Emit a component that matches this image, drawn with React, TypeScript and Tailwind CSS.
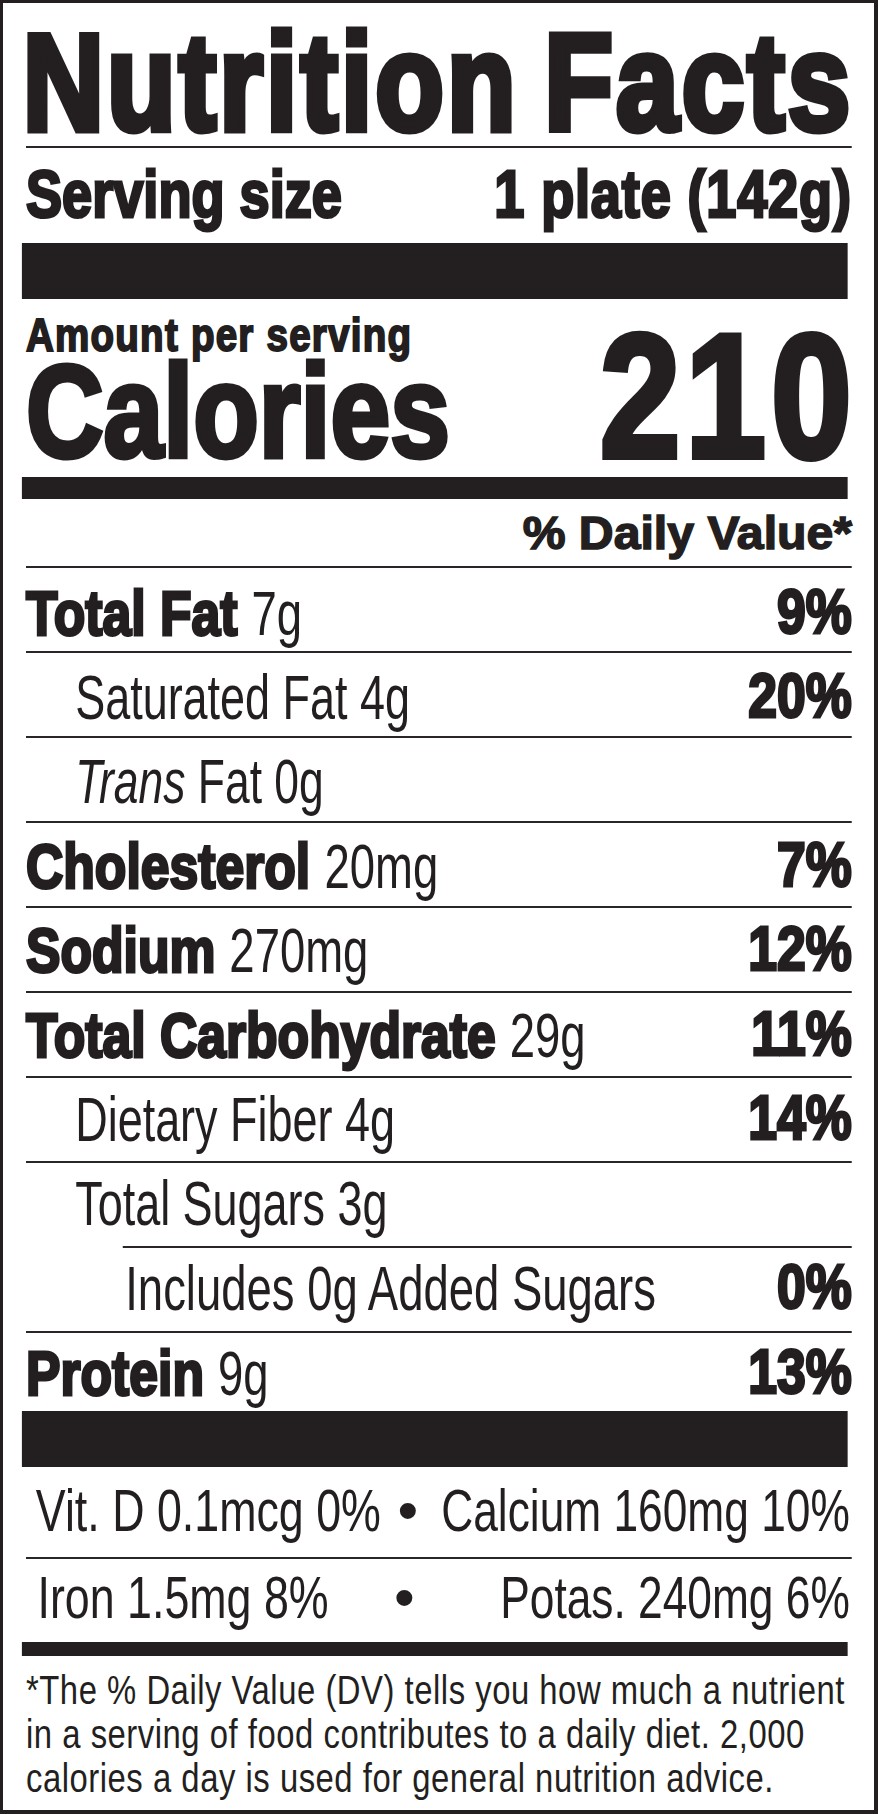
import React from "react";

// The label is typeset in Arial-metric faces and condensed horizontally
// (the whole column is drawn at 1007px and narrowed to 826px).
const B = "font-['Liberation_Sans',Arial,sans-serif] font-bold";
const R = "font-['Liberation_Sans',Arial,sans-serif] font-normal";

type Row = {
  kind: "bold" | "sub" | "trans" | "subsub";
  label: string;
  amt?: string;
  pct: string;
  pt: string;
  h: string;
};

const rows: Row[] = [
  { kind: "bold", label: "Total Fat", amt: "7g", pct: "9%", pt: "pt-[13px]", h: "h-[83px]" },
  { kind: "sub", label: "Saturated Fat 4g", pct: "20%", pt: "pt-[12px]", h: "h-[83px]" },
  { kind: "trans", label: "Fat 0g", pct: "", pt: "pt-[11px]", h: "h-[83px]" },
  { kind: "bold", label: "Cholesterol", amt: "20mg", pct: "7%", pt: "pt-[11px]", h: "h-[83px]" },
  { kind: "bold", label: "Sodium", amt: "270mg", pct: "12%", pt: "pt-[10px]", h: "h-[83px]" },
  { kind: "bold", label: "Total Carbohydrate", amt: "29g", pct: "11%", pt: "pt-[10px]", h: "h-[83px]" },
  { kind: "sub", label: "Dietary Fiber 4g", pct: "14%", pt: "pt-[9px]", h: "h-[83px]" },
  { kind: "sub", label: "Total Sugars 3g", pct: "", pt: "pt-[8px]", h: "h-[83px]" },
  { kind: "subsub", label: "Includes 0g Added Sugars", pct: "0%", pt: "pt-[8px]", h: "h-[83px]" },
  { kind: "bold", label: "Protein", amt: "9g", pct: "13%", pt: "pt-[8px]", h: "h-[78px]" },
];

function NutrientRow({ r }: { r: Row }) {
  let left: React.ReactNode;
  if (r.kind === "bold") {
    left = (
      <div className="whitespace-nowrap">
        <span className={`${B} [-webkit-text-stroke:3px_#231f20]`}>{r.label}</span>
        <span className={`${R} inline-block origin-left scale-x-[0.88] ml-[17px]`}>{r.amt}</span>
      </div>
    );
  } else if (r.kind === "trans") {
    left = (
      <div className="pl-[60px] whitespace-nowrap">
        <span className={`${R} inline-block origin-left scale-x-[0.86]`}>
          <span className="italic">Trans</span> {r.label}
        </span>
      </div>
    );
  } else if (r.kind === "subsub") {
    left = (
      <div className="pl-[121px] whitespace-nowrap">
        <span className={`${R} inline-block origin-left scale-x-[0.88]`}>{r.label}</span>
      </div>
    );
  } else {
    left = (
      <div className="pl-[60px] whitespace-nowrap">
        <span className={`${R} inline-block origin-left scale-x-[0.87]`}>{r.label}</span>
      </div>
    );
  }
  return (
    <div className={`${r.h} ${r.pt} flex justify-between items-start text-[63px] leading-[60px]`}>
      <div className="flex-1 min-w-0">{left}</div>
      {r.pct ? (
        <div className={`${B} [-webkit-text-stroke:3px_#231f20] whitespace-nowrap`}>{r.pct}</div>
      ) : null}
    </div>
  );
}

function Line({ indent }: { indent?: boolean }) {
  return <div className={`h-[2px] bg-[#2a2627] ${indent ? "ml-[118px]" : ""}`} />;
}

function Bar({ h }: { h: string }) {
  return <div className={`${h} -ml-[5px] mr-[5px] bg-[#231f20]`} />;
}

export default function App() {
  return (
    <div className="w-[878px] h-[1814px] bg-white box-border border-[#231f20] border-t-[3px] border-l-[3px] border-r-[4px] border-b-[4px] overflow-hidden text-[#231f20]">
      <div className="pl-[23px] pr-[22px]">
        <div className="w-[1007px] origin-top-left scale-x-[0.82]">
          {/* Title */}
          <div
            className={`${B} pt-[20px] -ml-[4px] -mr-[2px] flex justify-between text-[137px] leading-[120px] tracking-[3.8px] [-webkit-text-stroke:7px_#231f20] whitespace-nowrap`}
          >
            <span>Nutrition</span>
            <span>Facts</span>
          </div>
          <div className="mt-[3px]">
            <Line />
          </div>

          {/* Serving size */}
          <div
            className={`${B} mt-[16px] flex justify-between text-[66px] leading-[60px] [-webkit-text-stroke:3px_#231f20] whitespace-nowrap`}
          >
            <span>Serving size</span>
            <span className="tracking-[1px]">1 plate (142g)</span>
          </div>

          <div className="mt-[19px]">
            <Bar h="h-[56px]" />
          </div>

          {/* Calories */}
          <div className={`${B} flex justify-between items-start whitespace-nowrap`}>
            <div className="mt-[16px]">
              <div className="text-[47px] leading-[40px] tracking-[1.5px] [-webkit-text-stroke:2px_#231f20]">
                Amount per serving
              </div>
              <div className="mt-[7px] text-[131px] leading-[100px] [-webkit-text-stroke:5px_#231f20]">
                Calories
              </div>
            </div>
            <div className="mt-[27px] -mr-[6px] text-[177px] leading-[140px] tracking-[6px] [-webkit-text-stroke:6px_#231f20]">
              210
            </div>
          </div>

          <div className="mt-[11px]">
            <Bar h="h-[22px]" />
          </div>

          <div className={`${B} mt-[14px] text-right text-[47px] leading-[40px] whitespace-nowrap`}>
            <span className="inline-block origin-right scale-x-[1.25] [-webkit-text-stroke:1.5px_#231f20]">
              % Daily Value*
            </span>
          </div>
          <div className="mt-[13px]">
            <Line />
          </div>

          {/* Nutrient rows */}
          {rows.map((r, i) => (
            <div key={i}>
              <NutrientRow r={r} />
              {i < rows.length - 1 ? <Line indent={i === 7} /> : null}
            </div>
          ))}

          <Bar h="h-[56px]" />

          {/* Vitamins & minerals */}
          <div className={`${R} h-[90px] pt-[14px] flex items-start text-[60px] leading-[60px] whitespace-nowrap`}>
            <div className="w-[454px] pl-[12px]">
              <span className="inline-block origin-left scale-x-[0.91]">Vit. D 0.1mcg 0%</span>
            </div>
            <div className="w-[24px] flex justify-center">
              <span className="inline-block scale-x-[1.2]">•</span>
            </div>
            <div className="flex-1 min-w-0 flex justify-end pr-[2px]">
              <span className="inline-block origin-right scale-x-[0.9]">Calcium 160mg 10%</span>
            </div>
          </div>
          <Line />
          <div className={`${R} h-[83px] pt-[9px] flex items-start text-[60px] leading-[60px] whitespace-nowrap`}>
            <div className="w-[450px] pl-[14px]">
              <span className="inline-block origin-left scale-x-[0.91]">Iron 1.5mg 8%</span>
            </div>
            <div className="w-[24px] flex justify-center">
              <span className="inline-block scale-x-[1.2]">•</span>
            </div>
            <div className="flex-1 min-w-0 flex justify-end pr-[2px]">
              <span className="inline-block origin-right scale-x-[0.9]">Potas. 240mg 6%</span>
            </div>
          </div>

          <Bar h="h-[14px]" />

          {/* Footnote */}
          <div className={`${R} mt-[12px] text-[40px] leading-[44px] tracking-[0.65px] whitespace-nowrap`}>
            <div>*The % Daily Value (DV) tells you how much a nutrient</div>
            <div>in a serving of food contributes to a daily diet. 2,000</div>
            <div>calories a day is used for general nutrition advice.</div>
          </div>
        </div>
      </div>
    </div>
  );
}
